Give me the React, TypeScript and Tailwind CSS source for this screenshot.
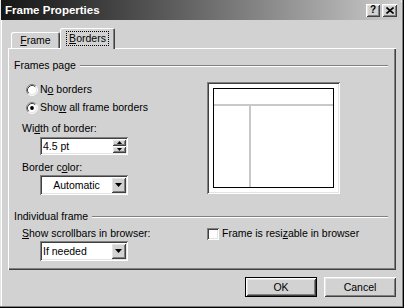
import React from "react";

const raised =
  "shadow-[inset_1px_1px_#ffffff,inset_-1px_-1px_#404040,inset_2px_2px_#e4e4e4,inset_-2px_-2px_#808080]";
const sunken =
  "shadow-[inset_1px_1px_#808080,inset_-1px_-1px_#ffffff,inset_2px_2px_#404040,inset_-2px_-2px_#e4e4e4]";

function Radio({ checked }: { checked?: boolean }) {
  return (
    <svg width="12" height="12" viewBox="0 0 12 12" className="shrink-0">
      <circle cx="6" cy="6" r="5" fill="#fff" />
      <path d="M2.11 9.89 A5.5 5.5 0 0 1 9.89 2.11" stroke="#808080" fill="none" />
      <path d="M9.89 2.11 A5.5 5.5 0 0 1 2.11 9.89" stroke="#fff" fill="none" />
      <path d="M2.82 9.18 A4.5 4.5 0 0 1 9.18 2.82" stroke="#404040" fill="none" />
      <path d="M9.18 2.82 A4.5 4.5 0 0 1 2.82 9.18" stroke="#e4e4e4" fill="none" />
      {checked && <circle cx="6" cy="6" r="1.9" fill="#000" />}
    </svg>
  );
}

function DownArrow() {
  return (
    <svg width="7" height="4" viewBox="0 0 7 4">
      <path d="M0 0 H7 L3.5 4 Z" fill="#000" />
    </svg>
  );
}

function Heading({ children }: { children: React.ReactNode }) {
  return (
    <div className="flex items-center h-[13px]">
      <span className="whitespace-nowrap">{children}</span>
      <div className="flex-1 ml-[4px] h-[2px] border-t border-b border-t-[#808080] border-b-white" />
    </div>
  );
}

function Select({ value, center }: { value: string; center?: boolean }) {
  return (
    <div className={`w-[88px] h-[20px] bg-white ${sunken} p-[2px] flex`}>
      <div className={`flex-1 flex items-center ${center ? "justify-center" : "pl-[1px]"}`}>{value}</div>
      <div className={`w-[15px] h-full bg-[#d2d2d2] ${raised} flex items-center justify-center`}>
        <DownArrow />
      </div>
    </div>
  );
}

export default function App() {
  return (
    <div
      className={`w-[404px] h-[308px] bg-[#d2d2d2] flex flex-col pl-[1px] pr-[3px] text-black text-[10.5px] leading-[13px] font-['Liberation_Sans',Arial,sans-serif] shadow-[inset_-1px_-1px_#000,inset_-2px_-2px_#808080,inset_1px_1px_#e4e4e4,inset_2px_2px_#fff]`}
    >
      {/* Title bar */}
      <div className="h-[20px] flex items-center justify-between bg-linear-to-r from-[#161616] via-[#6a6a6a] to-[#cdcdcd] pl-[4px] pr-[4px]">
        <span className="text-white font-bold text-[11.5px]">Frame Properties</span>
        <div className="flex gap-[2px]">
          <div className={`w-[14px] h-[13px] bg-[#d2d2d2] ${raised} flex items-center justify-center font-bold text-[10px] leading-none`}>?</div>
          <div className={`w-[15px] h-[13px] bg-[#d2d2d2] ${raised} flex items-center justify-center`}>
            <svg width="8" height="7" viewBox="0 0 8 7">
              <path d="M0.5 0.5 L7.5 6.5 M7.5 0.5 L0.5 6.5" stroke="#000" strokeWidth="1.6" />
            </svg>
          </div>
        </div>
      </div>

      {/* Tabs */}
      <div className="mt-[8px] h-[20px] flex items-end pl-[10px]">
        <div className="w-[49px] h-[16px] rounded-t-[2px] shadow-[inset_1px_1px_#ffffff,inset_-1px_0_#404040,inset_-2px_0_#808080] flex items-center justify-center pt-[1px]">
          <span>
            <span className="underline">F</span>rame
          </span>
        </div>
        <div className="relative z-10 w-[55px] h-[21px] -mb-[1px] bg-[#d2d2d2] rounded-t-[2px] shadow-[inset_1px_1px_#ffffff,inset_-1px_0_#404040,inset_-2px_0_#808080] flex items-start justify-center pt-[3px]">
          <span className="border border-dotted border-black px-[2px] leading-[13px]">
            <span className="underline">B</span>orders
          </span>
        </div>
      </div>

      {/* Panel */}
      <div className="ml-[7px] w-[388px] h-[222px] shadow-[inset_1px_1px_#ffffff,inset_-1px_-1px_#404040,inset_-2px_-2px_#808080] pl-[6px] pt-[11px] pr-[8px] flex flex-col">
        <Heading>Frames page</Heading>
        <div className="flex mt-[10px]">
          <div className="w-[193px] flex flex-col">
            <div className="flex items-center h-[13px] mt-[1px] pl-[12px]">
              <Radio />
              <span className="ml-[2px]">
                N<span className="underline">o</span> borders
              </span>
            </div>
            <div className="flex items-center h-[13px] mt-[5px] pl-[12px]">
              <Radio checked />
              <span className="ml-[2px]">
                Sho<span className="underline">w</span> all frame borders
              </span>
            </div>
            <div className="mt-[8px] pl-[8px] h-[13px]">
              Wi<span className="underline">d</span>th of border:
            </div>
            <div className={`mt-[2px] ml-[26px] w-[88px] h-[18px] bg-white ${sunken} p-[2px] flex`}>
              <div className="flex-1 flex items-center pl-[1px]">4.5 pt</div>
              <div className="w-[14px] flex flex-col">
                <div className={`flex-1 bg-[#d2d2d2] ${raised} flex items-center justify-center`}>
                  <svg width="5" height="3" viewBox="0 0 5 3">
                    <path d="M0 3 H5 L2.5 0 Z" fill="#000" />
                  </svg>
                </div>
                <div className={`flex-1 bg-[#d2d2d2] ${raised} flex items-center justify-center`}>
                  <svg width="5" height="3" viewBox="0 0 5 3">
                    <path d="M0 0 H5 L2.5 3 Z" fill="#000" />
                  </svg>
                </div>
              </div>
            </div>
            <div className="mt-[6px] pl-[8px] h-[13px]">
              Border c<span className="underline">o</span>lor:
            </div>
            <div className="mt-[1px] ml-[26px]">
              <Select value="Automatic" center />
            </div>
          </div>
          <div className={`w-[133px] h-[112px] bg-white ${sunken} p-[6px]`}>
            <div className="w-full h-full border border-black flex flex-col">
              <div className="h-[17px] border-b-2 border-[#c8c8c8]" />
              <div className="flex-1 flex">
                <div className="w-[37px] border-r-2 border-[#c8c8c8]" />
              </div>
            </div>
          </div>
        </div>

        <div className="mt-[15px]">
          <Heading>Individual frame</Heading>
        </div>
        <div className="flex">
          <div className="w-[193px] flex flex-col">
            <div className="mt-[4px] pl-[8px] h-[13px]">
              <span className="underline">S</span>how scrollbars in browser:
            </div>
            <div className="mt-[1px] ml-[26px]">
              <Select value="If needed" />
            </div>
          </div>
          <div className="flex items-center h-[13px] mt-[4px]">
            <div className={`w-[12px] h-[12px] bg-white ${sunken}`} />
            <span className="ml-[3px]">
              Frame is resi<span className="underline">z</span>able in browser
            </span>
          </div>
        </div>
      </div>

      {/* Buttons */}
      <div className="mt-[7px] flex justify-end gap-[7px] pr-[5px]">
        <div className={`w-[72px] h-[20px] border border-black ${raised} flex items-center justify-center`}>OK</div>
        <div className={`w-[72px] h-[20px] ${raised} flex items-center justify-center`}>Cancel</div>
      </div>
    </div>
  );
}
